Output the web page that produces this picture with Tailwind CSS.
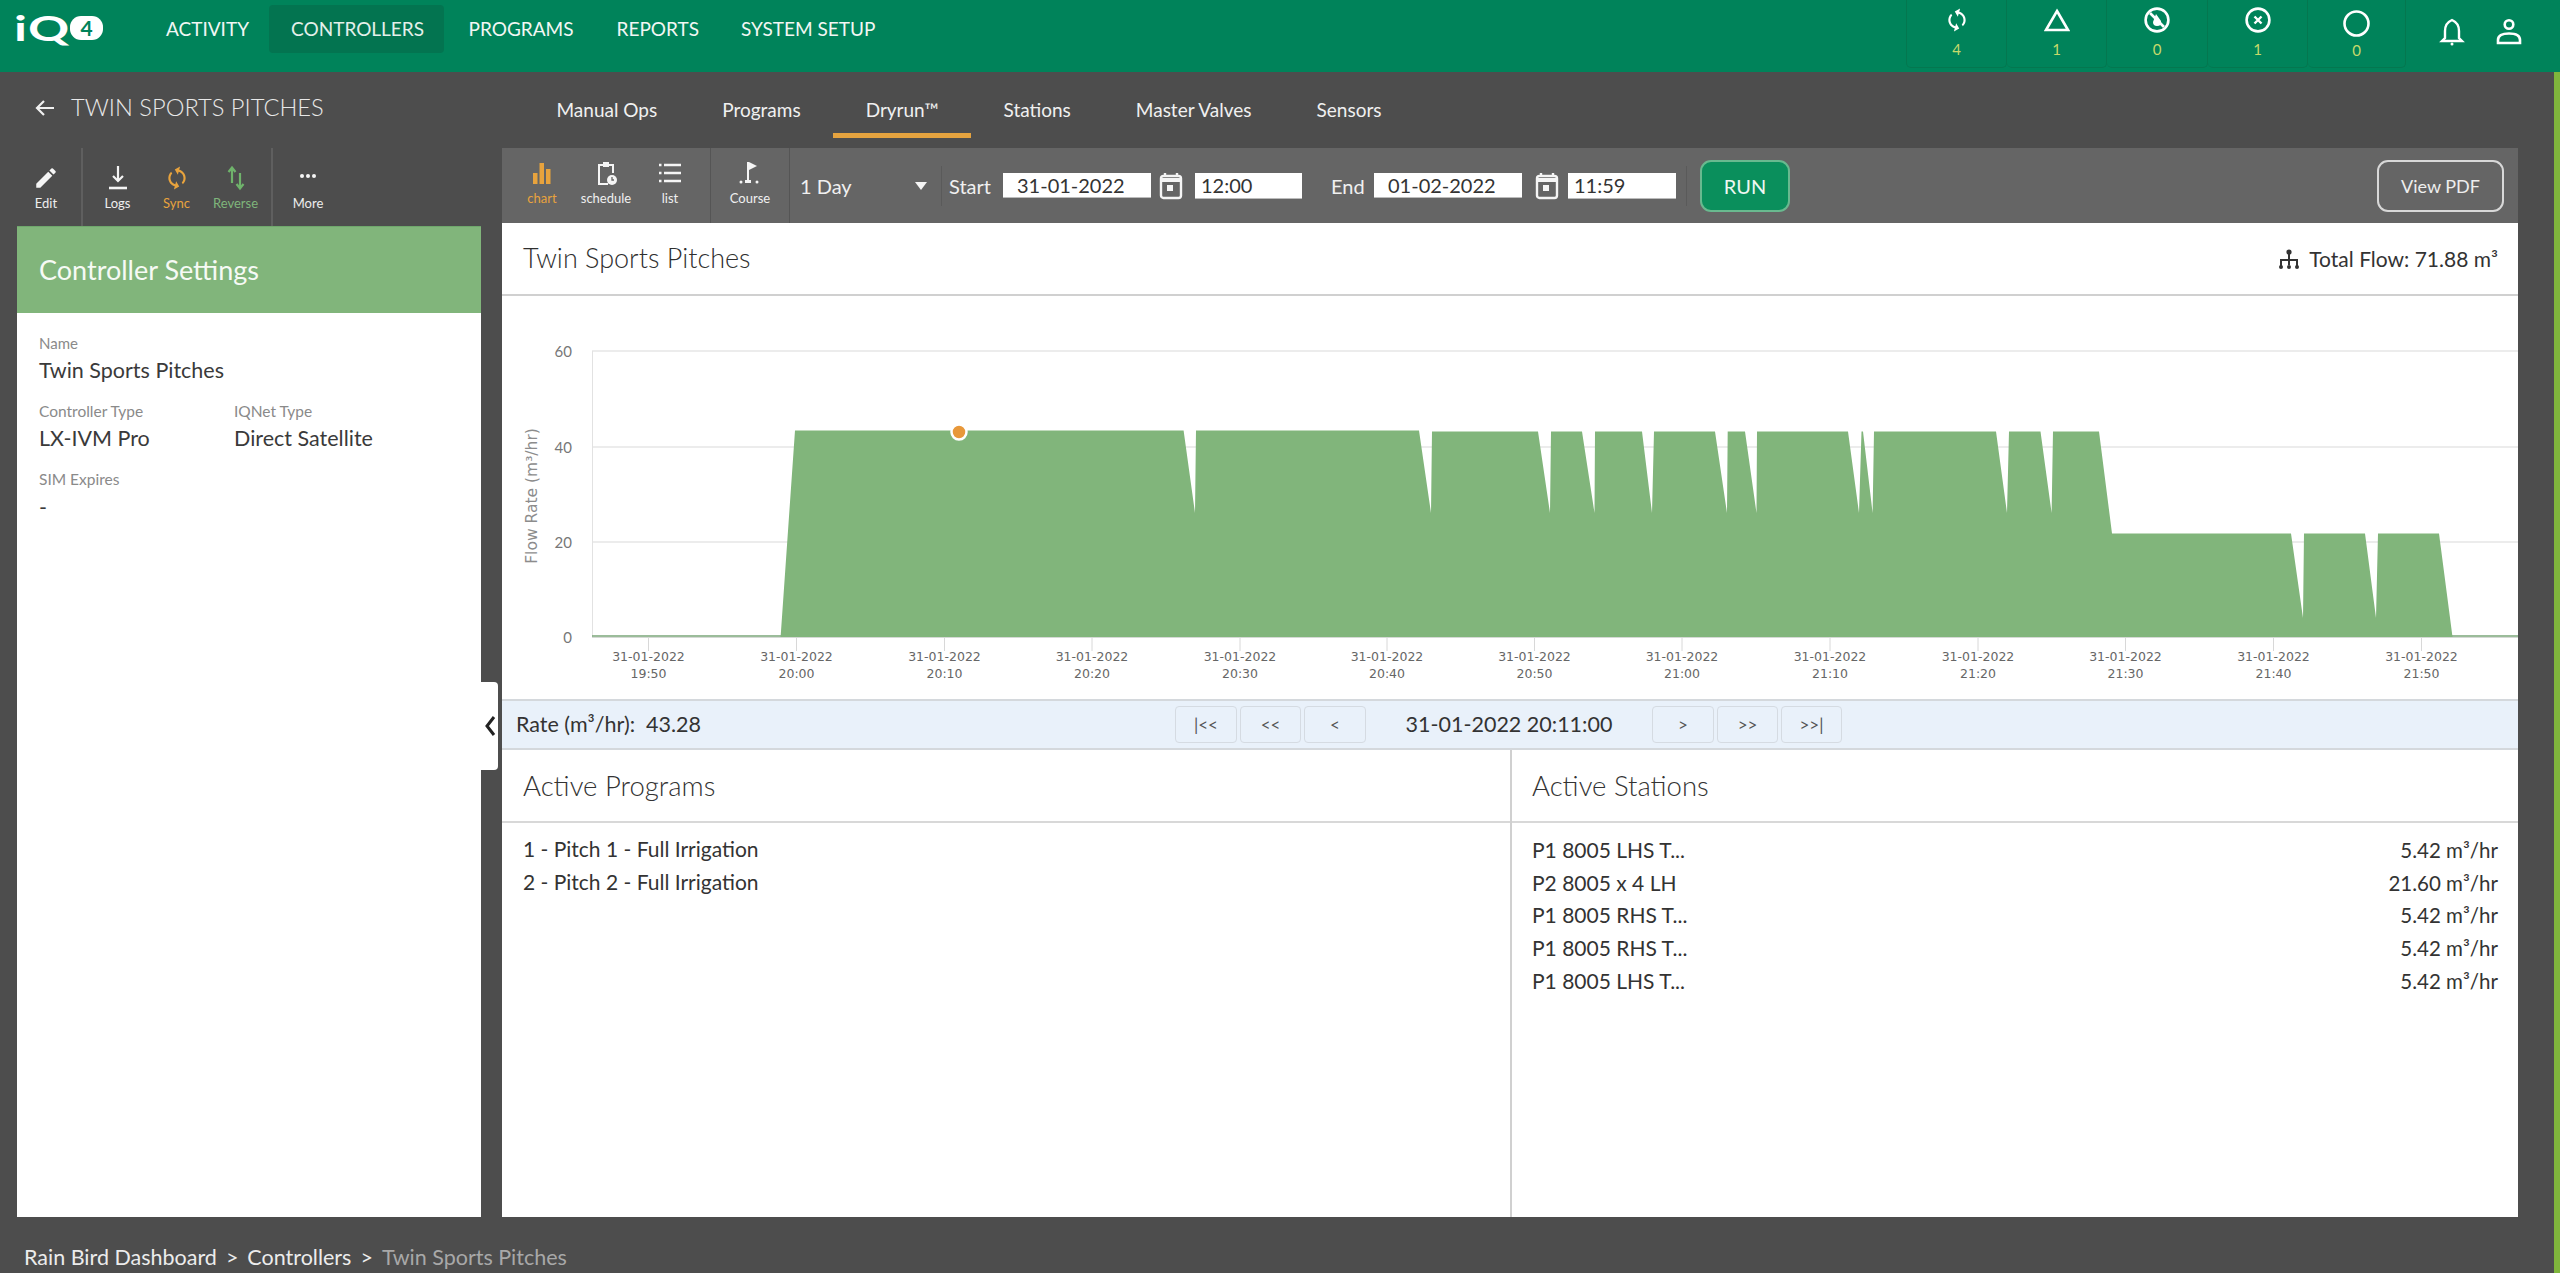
<!DOCTYPE html>
<html lang="en">
<head>
<meta charset="utf-8">
<title>Twin Sports Pitches</title>
<script src="https://cdn.jsdelivr.net/npm/@tailwindcss/browser@4"></script>
</head>
<body class="m-0">
<div class="relative w-[2560px] h-[1273px] overflow-hidden bg-[#4d4d4d] font-['Lato',sans-serif] text-white flex flex-col">
  <div class="absolute right-0 top-[72px] bottom-0 w-[6px] bg-[#7fb53c]"></div>

  <!-- Header -->
  <header class="h-[72px] bg-[#00835a] flex items-start shrink-0">
    <div class="w-[144px] h-[72px] pl-[14px] pt-[16px] flex items-start">
      <span class="w-[56px] text-[34px] leading-[24px] font-bold tracking-[1px] origin-left scale-x-150">iQ</span>
      <span class="w-[33px] h-[24px] rounded-[11px] bg-white text-[#00835a] text-[21px] leading-[24px] font-bold text-center">4</span>
    </div>
    <nav class="flex text-[19px] leading-[48px] mt-[5px]">
      <a class="pl-[22px] pr-[20px] h-[48px] text-[#f2f7f4]">ACTIVITY</a>
      <a class="pl-[22px] h-[48px] w-[175px] rounded-[4px] bg-[#037450] text-[#e4f0ea]">CONTROLLERS</a>
      <a class="pl-[24.5px] pr-[22px] h-[48px] text-[#f2f7f4]">PROGRAMS</a>
      <a class="px-[21px] h-[48px] text-[#f2f7f4]">REPORTS</a>
      <a class="px-[21px] h-[48px] text-[#f2f7f4]">SYSTEM SETUP</a>
    </nav>
    <div class="ml-auto flex h-[68px] mr-[37px]">
      <div class="w-[101px] h-[68px] border border-t-0 border-[#04774f] rounded-b-[5px] flex flex-col items-center pt-[7px]">
        <svg class="w-[26px] h-[26px] rotate-[15deg]" viewBox="0 0 24 24" fill="#fff"><path d="M12 4V1L8 5l4 4V6c3.31 0 6 2.69 6 6 0 1.01-.25 1.97-.7 2.8l1.46 1.46A7.93 7.93 0 0 0 20 12c0-4.42-3.58-8-8-8zm0 14c-3.31 0-6-2.69-6-6 0-1.01.25-1.97.7-2.8L5.24 7.74A7.93 7.93 0 0 0 4 12c0 4.42 3.58 8 8 8v3l4-4-4-4v3z"/></svg>
        <span class="text-[15px] leading-[18px] mt-[7px] text-[#c6d96b]">4</span>
      </div>
      <div class="w-[100px] h-[68px] border border-t-0 border-l-0 border-[#04774f] rounded-b-[5px] flex flex-col items-center pt-[7px]">
        <svg class="w-[26px] h-[26px]" viewBox="0 0 26 26" fill="none" stroke="#fff" stroke-width="2.6"><path d="M13 4 L24 23 H2 Z"/></svg>
        <span class="text-[15px] leading-[18px] mt-[7px] text-[#c6d96b]">1</span>
      </div>
      <div class="w-[101px] h-[68px] border border-t-0 border-l-0 border-[#04774f] rounded-b-[5px] flex flex-col items-center pt-[7px]">
        <svg class="w-[26px] h-[26px]" viewBox="0 0 26 26" fill="none" stroke="#fff" stroke-width="2.6"><circle cx="13" cy="13" r="11.4"/><path d="M6 6 L20 20"/><path d="M12 7 L17 14 Q18 19 13 19 Q9 19 9 15 Z" fill="#fff" stroke="none"/></svg>
        <span class="text-[15px] leading-[18px] mt-[7px] text-[#c6d96b]">0</span>
      </div>
      <div class="w-[100px] h-[68px] border border-t-0 border-l-0 border-[#04774f] rounded-b-[5px] flex flex-col items-center pt-[7px]">
        <svg class="w-[26px] h-[26px]" viewBox="0 0 26 26" fill="none" stroke="#fff" stroke-width="2.6"><circle cx="13" cy="13" r="11.4"/><path d="M9.5 9.5 L16.5 16.5 M16.5 9.5 L9.5 16.5" stroke-width="2.4"/></svg>
        <span class="text-[15px] leading-[18px] mt-[7px] text-[#c6d96b]">1</span>
      </div>
      <div class="w-[98px] h-[68px] border border-t-0 border-l-0 border-[#04774f] rounded-b-[5px] flex flex-col items-center pt-[10px]">
        <svg class="w-[27px] h-[27px]" viewBox="0 0 27 27" fill="none" stroke="#fff" stroke-width="2.6"><circle cx="13.5" cy="13.5" r="12"/></svg>
        <span class="text-[15px] leading-[18px] mt-[4px] text-[#c6d96b]">0</span>
      </div>
      <svg class="ml-[33px] mt-[18px] w-[26px] h-[28px]" viewBox="0 0 26 28" fill="none" stroke="#fff" stroke-width="2.4"><path d="M13 2 Q6 5 6 13 V20 L3 23 H23 L20 20 V13 Q20 5 13 2 Z"/><circle cx="13" cy="26" r="1.5" fill="#fff" stroke="none"/></svg>
      <svg class="ml-[30px] mt-[18px] w-[28px] h-[28px]" viewBox="0 0 28 28" fill="none" stroke="#fff" stroke-width="2.6"><circle cx="14" cy="6.5" r="4.3"/><path d="M3 25 V22 Q3 15.5 14 15.5 Q25 15.5 25 22 V25 Z"/></svg>
    </div>
  </header>

  <!-- Sub header -->
  <div class="h-[76px] flex shrink-0">
    <div class="w-[524px] flex items-center h-[72px] pl-[35px]">
      <svg class="w-[20px] h-[20px]" viewBox="0 0 20 20" fill="none" stroke="#f0f0f0" stroke-width="2.2"><path d="M19 10 H2 M9 3 L2 10 L9 17"/></svg>
      <span class="ml-[16px] text-[23.7px] font-light text-[#e8e8e8]">TWIN SPORTS PITCHES</span>
    </div>
    <div class="flex text-[19px] text-[#f0f0f0]">
      <a class="px-[32.5px] h-[66px] leading-[76px]">Manual Ops</a>
      <a class="px-[32.5px] h-[66px] leading-[76px]">Programs</a>
      <a class="px-[32.5px] h-[66px] leading-[76px] border-b-[5px] border-[#e5a33f]">Dryrun™</a>
      <a class="px-[32.5px] h-[66px] leading-[76px]">Stations</a>
      <a class="px-[32.5px] h-[66px] leading-[76px]">Master Valves</a>
      <a class="px-[32.5px] h-[66px] leading-[76px]">Sensors</a>
    </div>
  </div>

  <!-- Body -->
  <div class="flex h-[1069px] shrink-0">
    <aside class="relative w-[502px] pl-[17px] shrink-0 flex flex-col">
      <div class="h-[78px] flex text-[13px] leading-[16px] text-[#eee] shrink-0">
        <div class="w-[66px] border-r-2 border-[#5f5f5f] pr-[6px] flex flex-col items-center pt-[17px]">
          <svg class="w-[26px] h-[26px]" viewBox="0 0 24 24" fill="#f5f5f5"><path d="M3 17.25V21h3.75L17.81 9.94l-3.75-3.75L3 17.25zM20.71 7.04a1 1 0 0 0 0-1.41l-2.34-2.34a1 1 0 0 0-1.41 0l-1.83 1.83 3.75 3.75 1.83-1.83z"/></svg>
          <span class="mt-[4px]">Edit</span>
        </div>
        <div class="w-[190px] border-r-2 border-[#5f5f5f] pl-[5px] flex">
          <div class="w-[59px] flex flex-col items-center pt-[17px]">
            <svg class="w-[22px] h-[26px]" viewBox="0 0 22 26" fill="none" stroke="#f5f5f5" stroke-width="2.2"><path d="M11 1 V15 M6 11 L11 16 L16 11"/><path d="M2 23 H20" stroke-width="2.6"/></svg>
            <span class="mt-[4px]">Logs</span>
          </div>
          <div class="w-[59px] flex flex-col items-center pt-[17px] text-[#e8a33d]">
            <svg class="w-[26px] h-[26px] rotate-[15deg]" viewBox="0 0 24 24" fill="#e8a33d"><path d="M12 4V1L8 5l4 4V6c3.31 0 6 2.69 6 6 0 1.01-.25 1.97-.7 2.8l1.46 1.46A7.93 7.93 0 0 0 20 12c0-4.42-3.58-8-8-8zm0 14c-3.31 0-6-2.69-6-6 0-1.01.25-1.97.7-2.8L5.24 7.74A7.93 7.93 0 0 0 4 12c0 4.42 3.58 8 8 8v3l4-4-4-4v3z"/></svg>
            <span class="mt-[4px]">Sync</span>
          </div>
          <div class="w-[59px] flex flex-col items-center pt-[17px] text-[#7fb57b]">
            <svg class="w-[22px] h-[26px]" viewBox="0 0 22 26" fill="none" stroke="#6fb36b" stroke-width="2.2"><path d="M7 18 V3 M3.5 7 L7 2.5 L10.5 7"/><path d="M15 8 V23 M11.5 19 L15 23.5 L18.5 19"/></svg>
            <span class="mt-[4px]">Reverse</span>
          </div>
        </div>
        <div class="w-[70px] flex flex-col items-center pt-[17px]">
          <svg class="w-[22px] h-[26px]" viewBox="0 0 22 26" fill="#f5f5f5"><circle cx="5" cy="11" r="2"/><circle cx="11" cy="11" r="2"/><circle cx="17" cy="11" r="2"/></svg>
          <span class="mt-[4px]">More</span>
        </div>
      </div>
      <div class="w-[464px] h-[87px] bg-[#81b57b] flex items-center pl-[22px] text-[27px] text-[#f6faf5] shrink-0 border-t border-[#6fa76c]">Controller Settings</div>
      <div class="w-[464px] flex-1 bg-white pl-[22px] text-[#3a3a3a]">
        <div class="text-[15px] leading-[18px] text-[#8a8a8a] mt-[21px]">Name</div>
        <div class="text-[21.5px] leading-[26px] mt-[5px]">Twin Sports Pitches</div>
        <div class="flex mt-[19px]">
          <div class="w-[195px]">
            <div class="text-[15.5px] leading-[18px] text-[#8a8a8a]">Controller Type</div>
            <div class="text-[21.5px] leading-[26px] mt-[5px]">LX-IVM Pro</div>
          </div>
          <div>
            <div class="text-[15.5px] leading-[18px] text-[#8a8a8a]">IQNet Type</div>
            <div class="text-[21.5px] leading-[26px] mt-[5px]">Direct Satellite</div>
          </div>
        </div>
        <div class="text-[15.5px] leading-[18px] text-[#8a8a8a] mt-[19px]">SIM Expires</div>
        <div class="text-[21.5px] leading-[26px] mt-[6px]">-</div>
      </div>
      <div class="absolute left-[481px] top-[534px] w-[17px] h-[88px] bg-white rounded-r-[4px] flex items-center justify-center">
        <svg class="w-[12px] h-[22px]" viewBox="0 0 12 22" fill="none" stroke="#222" stroke-width="3"><path d="M10 2 L3 11 L10 20"/></svg>
      </div>
    </aside>

    <main class="w-[2016px] flex flex-col shrink-0">
      <!-- Toolbar -->
      <div class="h-[75px] bg-[#656565] flex items-center shrink-0 text-[20px] text-[#f0f0f0]">
        <div class="w-[209px] h-full pl-[8px] flex border-r border-[#555] text-[13px] leading-[16px]">
          <div class="w-[64px] flex flex-col items-center pt-[12px] text-[#e8a33d]">
            <svg class="w-[26px] h-[26px]" viewBox="0 0 26 26" fill="#e8a33d"><rect x="4" y="13" width="4.5" height="11"/><rect x="10.5" y="3" width="4.5" height="21"/><rect x="17" y="9" width="4.5" height="15"/></svg>
            <span class="mt-[4px]">chart</span>
          </div>
          <div class="w-[64px] flex flex-col items-center pt-[12px]">
            <svg class="w-[26px] h-[26px]" viewBox="0 0 26 26" fill="none" stroke="#f5f5f5" stroke-width="2"><path d="M15 24 H6 V5 H20 V13"/><rect x="10" y="2" width="6" height="5" fill="#f5f5f5" stroke="none"/><circle cx="19" cy="20" r="5" fill="#f5f5f5" stroke="none"/><path d="M19 17 V20 H21" stroke="#656565" stroke-width="1.3"/></svg>
            <span class="mt-[4px]">schedule</span>
          </div>
          <div class="w-[64px] flex flex-col items-center pt-[12px]">
            <svg class="w-[26px] h-[26px]" viewBox="0 0 26 26" fill="none" stroke="#f5f5f5" stroke-width="2.4"><path d="M2 5 H4.5 M7 5 H24 M2 13 H4.5 M7 13 H24 M2 21 H4.5 M7 21 H24"/></svg>
            <span class="mt-[4px]">list</span>
          </div>
        </div>
        <div class="w-[79px] h-full border-r border-[#555] flex flex-col items-center pt-[12px] text-[13px] leading-[16px]">
          <svg class="w-[26px] h-[26px]" viewBox="0 0 26 26" fill="#f5f5f5"><rect x="10" y="2" width="2" height="19"/><path d="M12 2 L20 6 L12 10 Z"/><rect x="8" y="20" width="6" height="3"/><circle cx="20" cy="22" r="1.5"/><circle cx="4" cy="22" r="1.5"/></svg>
          <span class="mt-[4px]">Course</span>
        </div>
        <div class="w-[152px] h-[40px] border-r border-[#5a5a5a] pl-[10px] pr-[14px] flex items-center justify-between">
          <span>1 Day</span>
          <svg class="w-[12px] h-[8px]" viewBox="0 0 12 8" fill="#f5f5f5"><path d="M0 0 H12 L6 8 Z"/></svg>
        </div>
        <span class="ml-[7px] w-[54px]">Start</span>
        <div class="w-[148px] h-[25px] bg-white text-[#333] pl-[14px] leading-[24px] border-b border-[#bbb]">31-01-2022</div>
        <svg class="ml-[8px] w-[24px] h-[28px]" viewBox="0 0 24 28" fill="none" stroke="#f5f5f5" stroke-width="2.4"><rect x="2" y="4" width="20" height="22" rx="2.5"/><path d="M2 8 H22" stroke-width="4"/><path d="M6 1 V4 M18 1 V4"/><rect x="8" y="13" width="6" height="6" fill="#f5f5f5" stroke="none"/></svg>
        <div class="ml-[12px] w-[107px] h-[26px] bg-white text-[#333] pl-[6px] leading-[25px] border-b border-[#bbb]">12:00</div>
        <span class="ml-[29px] w-[43px]">End</span>
        <div class="w-[148px] h-[25px] bg-white text-[#333] pl-[14px] leading-[24px] border-b border-[#bbb]">01-02-2022</div>
        <svg class="ml-[13px] w-[24px] h-[28px]" viewBox="0 0 24 28" fill="none" stroke="#f5f5f5" stroke-width="2.4"><rect x="2" y="4" width="20" height="22" rx="2.5"/><path d="M2 8 H22" stroke-width="4"/><path d="M6 1 V4 M18 1 V4"/><rect x="8" y="13" width="6" height="6" fill="#f5f5f5" stroke="none"/></svg>
        <div class="ml-[9px] w-[108px] h-[26px] bg-white text-[#333] pl-[6px] leading-[25px] border-b border-[#bbb]">11:59</div>
        <div class="ml-[10px] h-[40px] border-l border-[#5a5a5a]"></div>
        <div class="ml-[13px] w-[90px] h-[52px] rounded-[11px] bg-[#0a8f5c] border-2 border-[#69b98f] text-center leading-[48px] text-[#eef7f2]">RUN</div>
        <div class="ml-auto mr-[14px] w-[127px] h-[52px] rounded-[11px] border-2 border-[#d8d8d8] text-center leading-[48px] text-[18px] text-[#eeeeee]">View PDF</div>
      </div>

      <!-- Title -->
      <div class="h-[73px] bg-white border-b-2 border-[#d0d0d0] flex items-center justify-between pl-[21px] pr-[20px] shrink-0 text-[#333]">
        <span class="text-[27px] font-light text-[#2f2f2f]">Twin Sports Pitches</span>
        <span class="flex items-center text-[21px]">
          <svg class="w-[22px] h-[22px] mr-[9px]" viewBox="0 0 22 22" fill="none" stroke="#333" stroke-width="2"><circle cx="11" cy="4" r="2.6" fill="#333" stroke="none"/><path d="M11 4 V17 M3 19 V12 H19 V19"/><circle cx="3" cy="19" r="2" fill="#333" stroke="none"/><circle cx="11" cy="19" r="2" fill="#333" stroke="none"/><circle cx="19" cy="19" r="2" fill="#333" stroke="none"/></svg>
          Total Flow: 71.88 m³
        </span>
      </div>

      <!-- Chart -->
      <svg class="block bg-white shrink-0" width="2016" height="403" viewBox="502 296 2016 403" font-family="'DejaVu Sans',sans-serif">
        <g stroke="#ececec" stroke-width="2">
          <path d="M592 351 H2518 M592 447 H2518 M592 542 H2518"/>
        </g>
        <path d="M592.5 351 V637" stroke="#e2e2e2" stroke-width="1"/>
        <polygon fill="#81b57b" points="780.6,637 795,430.5 1183.6,430.5 1195,513 1196,430.5 1419,430.5 1431,513 1432,431.5 1538,431.5 1550,513 1551,431.5 1582,431.5 1594.5,513 1595,431.5 1642,431.5 1652,513 1654,431.5 1715,431.5 1727,513 1727.7,431.5 1745,431.5 1756.5,513 1757,431.5 1848,431.5 1859,513 1861.5,431.5 1863,431.5 1872.6,513 1874,431.5 1996,431.5 2007,513 2009,431.5 2040.5,431.5 2051.6,513 2053,431.5 2099,431.5 2112,533.5 2291,533.5 2303,618 2304,533.5 2365,533.5 2376,618 2378,533.5 2439,533.5 2452.5,637"/>
        <path d="M592 636 H781 M2452 636 H2518" stroke="#7ba77a" stroke-width="1.5"/>
        <path d="M592 637.5 H2518" stroke="#d5d9d5" stroke-width="1"/>
        <path d="M648.5 638 v13 M796.5 638 v13 M944.5 638 v13 M1092 638 v13 M1240 638 v13 M1387 638 v13 M1534.5 638 v13 M1682 638 v13 M1830 638 v13 M1978 638 v13 M2125.5 638 v13 M2273.5 638 v13 M2421.5 638 v13" stroke="#d8d8d8" stroke-width="1"/>
        <circle cx="959" cy="432" r="7.5" fill="#e8983a" stroke="#fff" stroke-width="2.5"/>
        <g fill="#777" text-anchor="end" font-family="'Lato',sans-serif" font-size="15">
          <text x="572" y="357">60</text>
          <text x="572" y="453">40</text>
          <text x="572" y="548">20</text>
          <text x="572" y="643">0</text>
        </g>
        <text transform="translate(537 496) rotate(-90)" text-anchor="middle" font-size="15.5" fill="#8c8c8c">Flow Rate (m³/hr)</text>
        <g fill="#666" font-size="12.5" text-anchor="middle">
          <text x="648.5" y="661">31-01-2022</text><text x="648.5" y="678">19:50</text>
          <text x="796.5" y="661">31-01-2022</text><text x="796.5" y="678">20:00</text>
          <text x="944.5" y="661">31-01-2022</text><text x="944.5" y="678">20:10</text>
          <text x="1092" y="661">31-01-2022</text><text x="1092" y="678">20:20</text>
          <text x="1240" y="661">31-01-2022</text><text x="1240" y="678">20:30</text>
          <text x="1387" y="661">31-01-2022</text><text x="1387" y="678">20:40</text>
          <text x="1534.5" y="661">31-01-2022</text><text x="1534.5" y="678">20:50</text>
          <text x="1682" y="661">31-01-2022</text><text x="1682" y="678">21:00</text>
          <text x="1830" y="661">31-01-2022</text><text x="1830" y="678">21:10</text>
          <text x="1978" y="661">31-01-2022</text><text x="1978" y="678">21:20</text>
          <text x="2125.5" y="661">31-01-2022</text><text x="2125.5" y="678">21:30</text>
          <text x="2273.5" y="661">31-01-2022</text><text x="2273.5" y="678">21:40</text>
          <text x="2421.5" y="661">31-01-2022</text><text x="2421.5" y="678">21:50</text>
        </g>
      </svg>

      <!-- Rate bar -->
      <div class="h-[51px] bg-[#e9f1fa] border-y-2 border-[#d4d8dc] flex items-center shrink-0 text-[#333] text-[21.5px] pl-[14px]">
        <span class="w-[207px] whitespace-nowrap">Rate (m³/hr):&nbsp; 43.28</span>
        <div class="ml-[452px] flex gap-[3px] text-[#555] text-[17px]">
          <button class="w-[62px] h-[37px] rounded-[4px] border border-[#d5dbe2]">|&lt;&lt;</button>
          <button class="w-[61px] h-[37px] rounded-[4px] border border-[#d5dbe2]">&lt;&lt;</button>
          <button class="w-[62px] h-[37px] rounded-[4px] border border-[#d5dbe2]">&lt;</button>
        </div>
        <span class="w-[286px] text-center whitespace-nowrap">31-01-2022 20:11:00</span>
        <div class="flex gap-[3px] text-[#555] text-[17px]">
          <button class="w-[62px] h-[37px] rounded-[4px] border border-[#d5dbe2]">&gt;</button>
          <button class="w-[61px] h-[37px] rounded-[4px] border border-[#d5dbe2]">&gt;&gt;</button>
          <button class="w-[61px] h-[37px] rounded-[4px] border border-[#d5dbe2]">&gt;&gt;|</button>
        </div>
      </div>

      <!-- Bottom panels -->
      <div class="flex-1 bg-white flex text-[#333]">
        <section class="w-[1010px] border-r-2 border-[#d0d0d0] shrink-0">
          <h2 class="h-[73px] border-b-2 border-[#d8d8d8] pl-[21px] flex items-center text-[27.5px] font-light">Active Programs</h2>
          <ul class="pt-[10px] pl-[21px] text-[21px] leading-[32.7px]">
            <li>1 - Pitch 1 - Full Irrigation</li>
            <li>2 - Pitch 2 - Full Irrigation</li>
          </ul>
        </section>
        <section class="flex-1">
          <h2 class="h-[73px] border-b-2 border-[#d8d8d8] pl-[20px] flex items-center text-[27.5px] font-light">Active Stations</h2>
          <ul class="pt-[11px] pl-[20px] pr-[20px] text-[21px] leading-[32.7px]">
            <li class="flex justify-between"><span>P1 8005 LHS T...</span><span class="text-[20.5px]">5.42 m³/hr</span></li>
            <li class="flex justify-between"><span>P2 8005 x 4 LH</span><span class="text-[20.5px]">21.60 m³/hr</span></li>
            <li class="flex justify-between"><span>P1 8005 RHS T...</span><span class="text-[20.5px]">5.42 m³/hr</span></li>
            <li class="flex justify-between"><span>P1 8005 RHS T...</span><span class="text-[20.5px]">5.42 m³/hr</span></li>
            <li class="flex justify-between"><span>P1 8005 LHS T...</span><span class="text-[20.5px]">5.42 m³/hr</span></li>
          </ul>
        </section>
      </div>
    </main>
  </div>

  <!-- Breadcrumb -->
  <footer class="flex-1 pl-[24px] pt-[26px] flex items-start leading-[28px] text-[21.5px] text-[#ececec]">
    <span>Rain Bird Dashboard</span><span class="ml-[9px]">&gt;</span><span class="ml-[9px]">Controllers</span><span class="ml-[9px]">&gt;</span><span class="ml-[9px] text-[#a8a8a8]">Twin Sports Pitches</span>
  </footer>
</div>
</body>
</html>
